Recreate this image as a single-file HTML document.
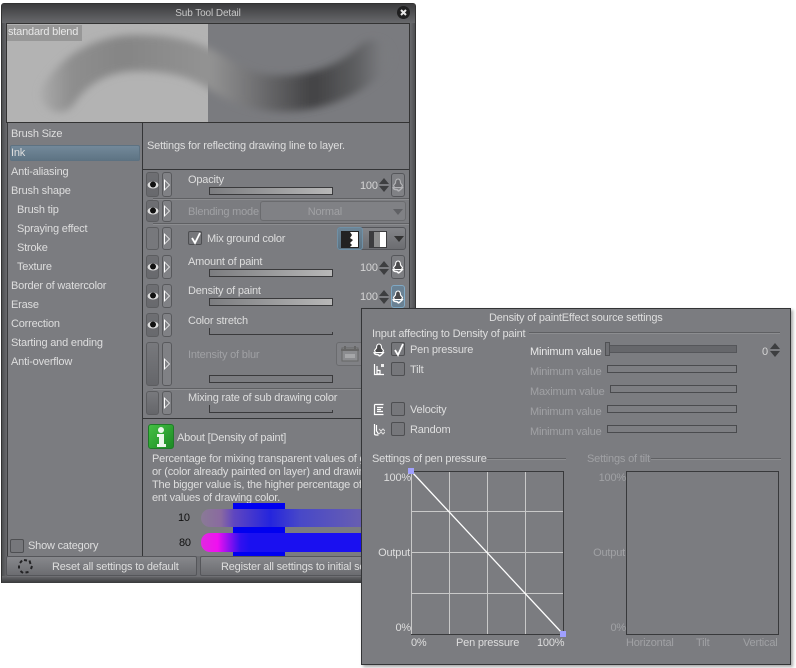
<!DOCTYPE html>
<html><head><meta charset="utf-8">
<style>
html,body{margin:0;padding:0;background:#fff}
body{width:796px;height:668px;position:relative;overflow:hidden;font-family:"Liberation Sans",sans-serif;font-size:11px;letter-spacing:-.19px;color:#dedede}
div,svg{position:absolute;box-sizing:border-box}
.t{position:absolute;white-space:nowrap;line-height:13px;height:13px;margin-top:1px}
.d{color:#a0a1a4}
.eb{left:146px;width:13px;border:1px solid #5c5d60;border-radius:3px;background:linear-gradient(#6e6f73,#68696d)}
.ab{left:162px;width:10px;border:1px solid #58595c;border-radius:3px;background:#808185}
.tri{position:absolute;left:1px;width:0;height:0;border-left:6px solid #fff;border-top:6px solid transparent;border-bottom:6px solid transparent}
.tri:after{content:"";position:absolute;left:-5px;top:-4px;border-left:4px solid #808185;border-top:4px solid transparent;border-bottom:4px solid transparent}
.sl{left:209px;width:124px;height:8px;border:1px solid #3a3a3c;background:linear-gradient(90deg,#7c7d80,#b8b8b8)}
.br{left:209px;width:124px;height:7px;border-left:1px solid #3a3a3c;border-bottom:1px solid #3a3a3c}
.br:after{content:"";position:absolute;right:0;bottom:0;width:1px;height:2px;background:#3a3a3c}
.cb{width:14px;height:14px;border:1px solid #4e4f52;border-radius:2px;background:#76777b}
.up{position:absolute;width:0;height:0;border-left:5px solid transparent;border-right:5px solid transparent;border-bottom:6px solid #3d3e40}
.dn{position:absolute;width:0;height:0;border-left:5px solid transparent;border-right:5px solid transparent;border-top:6px solid #3d3e40}
.pb{left:391px;width:14px;border:1px solid #55565a;border-radius:3px;background:#7d7e82}
.ln{height:1px;background:#5f6063;box-shadow:0 1px 0 #8c8d90}
.ps{height:8px;border:1px solid #4a4b4e;background:#7d7e82}
.g{background:#c9c9c9}
</style></head><body>

<svg width="0" height="0" style="left:0;top:0"><defs>
<symbol id="pen" viewBox="0 0 12 14"><path d="M3.500 5Q3.500 1 6 1T8.500 5L10.500 7.500 9.500 9.500h-7L1.500 7.500z" fill="#4a4a4c" stroke="#fff" stroke-width="1.100"/><path d="M1 9q.5 2.500 2.500 2.500t2.500 1 2.500-1T11 9" fill="none" stroke="#fff" stroke-width="1.500"/></symbol>
</defs></svg>

<!-- main window -->
<div style="left:1px;top:3px;width:415px;height:580px;background:#4f5053;border:1px solid #333;border-radius:3px 3px 0 0"></div>
<div style="left:2px;top:4px;width:413px;height:19px;background:linear-gradient(#3c3c3e,#68696c)"></div>
<div style="left:2px;top:23px;width:5px;height:553px;background:linear-gradient(90deg,#4e4f52,#6a6b6e)"></div>
<div style="left:410px;top:23px;width:5px;height:553px;background:linear-gradient(90deg,#6a6b6e,#4e4f52)"></div>
<div style="left:2px;top:576px;width:413px;height:7px;background:linear-gradient(#6a6b6e,#38393b)"></div>
<div class="t" style="left:0;width:416px;text-align:center;top:6px;font-size:10px;letter-spacing:-.1px;color:#c8c8c8">Sub Tool Detail</div>
<div style="left:397px;top:6px;width:13px;height:13px;border-radius:50%;background:#1f1f20"></div>
<svg style="left:397px;top:6px" width="13" height="13"><path d="M4 4l5 5M9 4l-5 5" stroke="#e8e8e8" stroke-width="2"/></svg>

<!-- preview -->
<div style="left:6px;top:23px;width:404px;height:100px;border:1px solid #333;background:#7a7b7f;overflow:hidden">
<div style="left:0;top:0;width:201px;height:98px;background:#b3b3b3"></div>
<svg style="left:0;top:0" width="402" height="98">
<defs><linearGradient id="bg" gradientUnits="userSpaceOnUse" x1="30" y1="0" x2="375" y2="0">
<stop offset="0" stop-color="#aeaeae"/><stop offset=".1" stop-color="#8e8e8e"/><stop offset=".25" stop-color="#858585"/><stop offset=".5" stop-color="#939393"/><stop offset=".62" stop-color="#747476"/><stop offset=".8" stop-color="#424244"/><stop offset=".92" stop-color="#5c5d5f"/><stop offset="1" stop-color="#7a7b7f"/></linearGradient>
<filter id="bl" filterUnits="userSpaceOnUse" x="0" y="-20" width="402" height="140"><feGaussianBlur stdDeviation="4"/></filter></defs>
<path d="M52 70C66 48 92 29 130 29C165 29 190 35 215 52C240 68 265 72 295 68C325 64 350 50 366 34" fill="none" stroke="url(#bg)" stroke-width="36" stroke-linecap="round" filter="url(#bl)"/>
</svg>
<div class="t" style="left:0;top:1px;width:75px;height:16px;line-height:15px;margin-top:0;background:#979797;color:#e8e8e8;padding-left:1px">standard blend</div>
</div>

<!-- body -->
<div style="left:7px;top:123px;width:403px;height:434px;background:#7b7c80;border:1px solid #3a3b3d;border-top:0"></div>
<div style="left:142px;top:123px;width:1px;height:433px;background:#343537"></div>
<div style="left:143px;top:169px;width:266px;height:1px;background:#343537"></div>
<div style="left:143px;top:418px;width:266px;height:1px;background:#343537"></div>

<!-- list -->
<div style="left:10px;top:145px;width:130px;height:16px;border:1px solid #5d7282;border-radius:2px;background:linear-gradient(#73899a,#5e7484)"></div>
<div class="t" style="left:11px;top:127px">Brush Size</div>
<div class="t" style="left:11px;top:146px">Ink</div>
<div class="t" style="left:11px;top:165px">Anti-aliasing</div>
<div class="t" style="left:11px;top:184px">Brush shape</div>
<div class="t" style="left:17px;top:203px">Brush tip</div>
<div class="t" style="left:17px;top:222px">Spraying effect</div>
<div class="t" style="left:17px;top:241px">Stroke</div>
<div class="t" style="left:17px;top:260px">Texture</div>
<div class="t" style="left:11px;top:279px">Border of watercolor</div>
<div class="t" style="left:11px;top:298px">Erase</div>
<div class="t" style="left:11px;top:317px">Correction</div>
<div class="t" style="left:11px;top:336px">Starting and ending</div>
<div class="t" style="left:11px;top:355px">Anti-overflow</div>
<div class="cb" style="left:10px;top:539px"></div>
<div class="t" style="left:28px;top:539px">Show category</div>

<div class="t" style="left:147px;top:139px">Settings for reflecting drawing line to layer.</div>

<!-- rows buttons -->
<div class="eb" style="top:172px;height:25px"></div><div class="ab" style="top:172px;height:25px"><div class="tri" style="top:6px"></div></div>
<div class="eb" style="top:200px;height:22px"></div><div class="ab" style="top:200px;height:22px"><div class="tri" style="top:4px"></div></div>
<div class="eb" style="top:227px;height:23px;background:#77787c"></div><div class="ab" style="top:227px;height:23px"><div class="tri" style="top:5px"></div></div>
<div class="eb" style="top:255px;height:24px"></div><div class="ab" style="top:255px;height:24px"><div class="tri" style="top:5px"></div></div>
<div class="eb" style="top:284px;height:24px"></div><div class="ab" style="top:284px;height:24px"><div class="tri" style="top:5px"></div></div>
<div class="eb" style="top:313px;height:24px"></div><div class="ab" style="top:313px;height:24px"><div class="tri" style="top:5px"></div></div>
<div class="eb" style="top:342px;height:44px;background:linear-gradient(#78797d,#65666a)"></div><div class="ab" style="top:342px;height:44px"><div class="tri" style="top:15px"></div></div>
<div class="eb" style="top:391px;height:24px;background:linear-gradient(#78797d,#65666a)"></div><div class="ab" style="top:391px;height:24px"><div class="tri" style="top:5px"></div></div>

<!-- eyes -->
<svg style="left:147px;top:180px" width="12" height="10"><ellipse cx="6" cy="5" rx="5.500" ry="3.500" fill="#ddd"/><circle cx="6" cy="4.500" r="3" fill="#111"/></svg>
<svg style="left:147px;top:206px" width="12" height="10"><ellipse cx="6" cy="5" rx="5.500" ry="3.500" fill="#ddd"/><circle cx="6" cy="4.500" r="3" fill="#111"/></svg>
<svg style="left:147px;top:262px" width="12" height="10"><ellipse cx="6" cy="5" rx="5.500" ry="3.500" fill="#ddd"/><circle cx="6" cy="4.500" r="3" fill="#111"/></svg>
<svg style="left:147px;top:291px" width="12" height="10"><ellipse cx="6" cy="5" rx="5.500" ry="3.500" fill="#ddd"/><circle cx="6" cy="4.500" r="3" fill="#111"/></svg>
<svg style="left:147px;top:320px" width="12" height="10"><ellipse cx="6" cy="5" rx="5.500" ry="3.500" fill="#ddd"/><circle cx="6" cy="4.500" r="3" fill="#111"/></svg>

<!-- separators -->
<div class="ln" style="left:153px;top:198px;width:256px"></div>
<div class="ln" style="left:153px;top:223px;width:256px"></div>
<div class="ln" style="left:153px;top:388px;width:256px"></div>

<!-- labels -->
<div class="t" style="left:188px;top:173px">Opacity</div>
<div class="sl" style="top:187px"></div>
<div class="t" style="left:360px;top:179px;color:#d4d4d4">100</div>
<div class="up" style="left:379px;top:178px"></div><div class="dn" style="left:379px;top:186px"></div>
<div class="pb" style="top:173px;height:24px;background:#808185"><svg style="left:0;top:4px" width="12" height="14" opacity=".4"><use href="#pen"/></svg></div>

<div class="t d" style="left:188px;top:205px">Blending mode</div>
<div style="left:260px;top:201px;width:146px;height:20px;border:1px solid #6a6b6e;border-radius:3px;background:#808185"></div>
<div class="t d" style="left:260px;width:82px;text-align:right;top:205px">Normal</div>
<div class="dn" style="left:393px;top:209px;border-top-color:#606165"></div>

<div class="cb" style="left:188px;top:231px"></div>
<svg style="left:189px;top:231px" width="14" height="14"><path d="M3 7l3 5 5-10" fill="none" stroke="#fff" stroke-width="1.800"/></svg>
<div class="t" style="left:207px;top:232px">Mix ground color</div>
<div style="left:337px;top:227px;width:69px;height:23px;border:1px solid #55565a;border-radius:3px;background:linear-gradient(#848589,#6c6d71)"></div>
<div style="left:337px;top:227px;width:26px;height:23px;border:1px solid #6f90a6;border-radius:3px;background:linear-gradient(#6d8596,#5b7282)"></div>
<svg style="left:341px;top:231px" width="18" height="17"><rect width="18" height="17" fill="#222"/><path d="M9 1h8v15H9l2-2-2-2 3-3-3-2 2-3z" fill="#fff"/></svg>
<svg style="left:369px;top:231px" width="18" height="17"><rect width="18" height="17" fill="#3c3c3e"/><rect x="5" y="1" width="6" height="15" fill="#8c8c8c"/><rect x="11" y="1" width="6" height="15" fill="#fff"/></svg>
<div class="dn" style="left:394px;top:236px;border-top-color:#333"></div>

<div class="t" style="left:188px;top:255px">Amount of paint</div>
<div class="sl" style="top:269px"></div>
<div class="t" style="left:360px;top:261px;color:#d4d4d4">100</div>
<div class="up" style="left:379px;top:261px"></div><div class="dn" style="left:379px;top:269px"></div>
<div class="pb" style="top:255px;height:24px"><svg style="left:0;top:4px" width="12" height="14"><use href="#pen"/></svg></div>

<div class="t" style="left:188px;top:284px">Density of paint</div>
<div class="sl" style="top:298px"></div>
<div class="t" style="left:360px;top:290px;color:#d4d4d4">100</div>
<div class="up" style="left:379px;top:290px"></div><div class="dn" style="left:379px;top:298px"></div>
<div class="pb" style="top:285px;height:23px;border-color:#7fa8c4;background:#6a8193"><svg style="left:0;top:4px" width="12" height="14"><use href="#pen"/></svg></div>

<div class="t" style="left:188px;top:314px">Color stretch</div>
<div class="br" style="top:328px"></div>
<div class="t d" style="left:188px;top:348px">Intensity of blur</div>
<div style="left:336px;top:342px;width:30px;height:24px;border:1px solid #6a6b6e;border-radius:3px;background:#808185"></div>
<svg style="left:340px;top:345px" width="20" height="18"><path d="M2 3h16v13H2z" fill="#8b8c8f" stroke="#666"/><path d="M1 5h18M5 1v4M15 1v4" stroke="#666" stroke-width="2"/><rect x="5" y="9" width="10" height="4" fill="#a6a7a9"/></svg>
<div class="sl" style="top:375px;background:#7b7c80"></div>
<div class="t" style="left:188px;top:391px">Mixing rate of sub drawing color</div>
<div class="br" style="top:405px;height:8px"></div>

<!-- about -->
<div style="left:148px;top:424px;width:26px;height:25px;border-radius:3px;background:linear-gradient(135deg,#44c044,#1c8a24);border:1px solid #1f7a28"></div>
<svg style="left:148px;top:424px" width="26" height="25"><circle cx="13" cy="6" r="3" fill="#eaf6ea"/><path d="M9 10h7v10h2v3H9v-3h2v-7H9z" fill="#eaf6ea"/></svg>
<div class="t" style="left:177px;top:431px">About [Density of paint]</div>
<div class="t" style="left:152px;top:452px">Percentage for mixing transparent values of ground color</div>
<div class="t" style="left:152px;top:465px">or (color already painted on layer) and drawing color.</div>
<div class="t" style="left:152px;top:478px">The bigger value is, the higher percentage of transpar</div>
<div class="t" style="left:152px;top:491px">ent values of drawing color.</div>
<div class="t" style="left:178px;top:511px;color:#111">10</div>
<div class="t" style="left:179px;top:536px;color:#111">80</div>
<div style="left:233px;top:503px;width:52px;height:53px;background:#0000f0"></div>
<div style="left:201px;top:509px;width:165px;height:18px;border-radius:9px 0 0 9px;background:linear-gradient(90deg,#8a7a96,#8a6aa0 12%,#5f46c0 20%,#2525dd 42%,#4848c8 60%,#6a60b0)"></div>
<div style="left:201px;top:533px;width:165px;height:19px;border-radius:9px 0 0 9px;background:linear-gradient(90deg,#e02ae0,#f010f0 10%,#3010f0 24%,#1a10f0 30%,#1a10f0)"></div>

<!-- bottom buttons -->
<div style="left:7px;top:556px;width:403px;height:21px;background:#6e6f73"></div>
<div style="left:6px;top:556px;width:191px;height:20px;border:1px solid #55565a;border-radius:2px;background:linear-gradient(#87888c,#6c6d71)"></div>
<div style="left:200px;top:556px;width:200px;height:20px;border:1px solid #55565a;border-radius:2px;background:linear-gradient(#87888c,#6c6d71)"></div>
<svg style="left:17px;top:558px" width="17" height="17" fill="none" stroke="#232325" stroke-width="2"><path d="M7 2l3 .5M12.500 2.500l1 3.500M15 8l-1 3M11.500 14l-3 .5M6 15l-2.500-2M2 10.500V7.500M3 5l2-2.500"/></svg>
<div class="t" style="left:52px;top:560px">Reset all settings to default</div>
<div class="t" style="left:221px;top:560px">Register all settings to initial setting</div>

<!-- popup -->
<div style="left:361px;top:308px;width:430px;height:357px;background:#7b7c80;border:1px solid #333436;box-shadow:2px 2px 3px rgba(0,0,0,.35)"></div>
<div class="t" style="left:489px;top:311px">Density of paintEffect source settings</div>
<div class="t" style="left:372px;top:327px">Input affecting to Density of paint</div>
<div class="ln" style="left:529px;top:332px;width:251px"></div>

<svg style="left:373px;top:343px" width="12" height="14"><use href="#pen"/></svg>
<div class="cb" style="left:391px;top:342px"></div>
<svg style="left:392px;top:342px" width="14" height="15"><path d="M3 8l3 5 5-11" fill="none" stroke="#fff" stroke-width="1.800"/></svg>
<div class="t" style="left:410px;top:343px">Pen pressure</div>
<svg style="left:373px;top:363px" width="13" height="13"><path d="M1.500 1v10.500H11M4 7.500h3v3.500H4zM4 3v4" fill="none" stroke="#fff" stroke-width="1.200"/><rect x="8" y="1" width="3" height="3" fill="#eee"/></svg>
<div class="cb" style="left:391px;top:362px"></div>
<div class="t" style="left:410px;top:363px">Tilt</div>
<svg style="left:373px;top:403px" width="12" height="13"><path d="M1.500 1.500h9M1.500 1.500v10h9M4 4.500h6M4 6.500h4M4 8.500h6" fill="none" stroke="#fff" stroke-width="1.200"/></svg>
<div class="cb" style="left:391px;top:402px"></div>
<div class="t" style="left:410px;top:403px">Velocity</div>
<svg style="left:373px;top:423px" width="12" height="13"><path d="M1.500 1v10q0 1 2 1h2M3.500 2v6l2 3" fill="none" stroke="#fff" stroke-width="1.200"/><path d="M6 6l2 2 2-2 2 2M6 11l2-2 2 2 2-2" fill="none" stroke="#ddd"/></svg>
<div class="cb" style="left:391px;top:422px"></div>
<div class="t" style="left:410px;top:423px">Random</div>

<div class="t" style="left:530px;top:345px;color:#e8e8e8">Minimum value</div>
<div style="left:607px;top:345px;width:130px;height:8px;background:#66676b;border:1px solid #55565a"></div>
<div style="left:605px;top:342px;width:5px;height:14px;background:#6e6f73;border:1px solid #505154"></div>
<div class="t" style="left:762px;top:345px;color:#d4d4d4">0</div>
<div class="up" style="left:770px;top:343px"></div><div class="dn" style="left:770px;top:351px"></div>

<div class="t d" style="left:530px;top:365px">Minimum value</div><div class="ps" style="left:607px;top:365px;width:130px"></div>
<div class="t d" style="left:530px;top:385px">Maximum value</div><div class="ps" style="left:610px;top:385px;width:127px"></div>
<div class="t d" style="left:530px;top:405px">Minimum value</div><div class="ps" style="left:607px;top:405px;width:130px"></div>
<div class="t d" style="left:530px;top:425px">Minimum value</div><div class="ps" style="left:607px;top:425px;width:130px"></div>

<div class="t" style="left:372px;top:452px">Settings of pen pressure</div>
<div class="ln" style="left:487px;top:458px;width:79px"></div>
<div class="t d" style="left:587px;top:452px">Settings of tilt</div>
<div class="ln" style="left:651px;top:458px;width:130px"></div>

<!-- graph 1 -->
<div style="left:411px;top:471px;width:153px;height:164px;border:1px solid #38393b;border-left:0"></div>
<div class="g" style="left:411px;top:471px;width:1px;height:163px"></div>
<div class="g" style="left:449px;top:472px;width:1px;height:162px"></div>
<div class="g" style="left:487px;top:472px;width:1px;height:162px"></div>
<div class="g" style="left:525px;top:472px;width:1px;height:162px"></div>
<div class="g" style="left:412px;top:511px;width:151px;height:1px"></div>
<div class="g" style="left:412px;top:552px;width:151px;height:1px"></div>
<div class="g" style="left:412px;top:593px;width:151px;height:1px"></div>
<svg style="left:405px;top:465px" width="165" height="175"><path d="M6 6L158 169" stroke="#fff" stroke-width="1.300" fill="none"/><rect x="3" y="3" width="6" height="6" fill="#a0a0ff"/><rect x="155" y="166" width="6" height="6" fill="#a0a0ff"/></svg>
<div class="t" style="left:360px;width:51px;text-align:right;top:471px">100%</div>
<div class="t" style="left:360px;width:50px;text-align:right;top:546px">Output</div>
<div class="t" style="left:360px;width:51px;text-align:right;top:621px">0%</div>
<div class="t" style="left:411px;top:636px">0%</div>
<div class="t" style="left:456px;top:636px">Pen pressure</div>
<div class="t" style="left:537px;top:636px">100%</div>

<!-- graph 2 -->
<div style="left:626px;top:471px;width:153px;height:164px;border:1px solid #38393b"></div>
<div class="t d" style="left:575px;width:51px;text-align:right;top:471px">100%</div>
<div class="t d" style="left:575px;width:50px;text-align:right;top:546px">Output</div>
<div class="t d" style="left:575px;width:51px;text-align:right;top:621px">0%</div>
<div class="t d" style="left:626px;top:636px">Horizontal</div>
<div class="t d" style="left:696px;top:636px">Tilt</div>
<div class="t d" style="left:743px;top:636px">Vertical</div>

</body></html>
